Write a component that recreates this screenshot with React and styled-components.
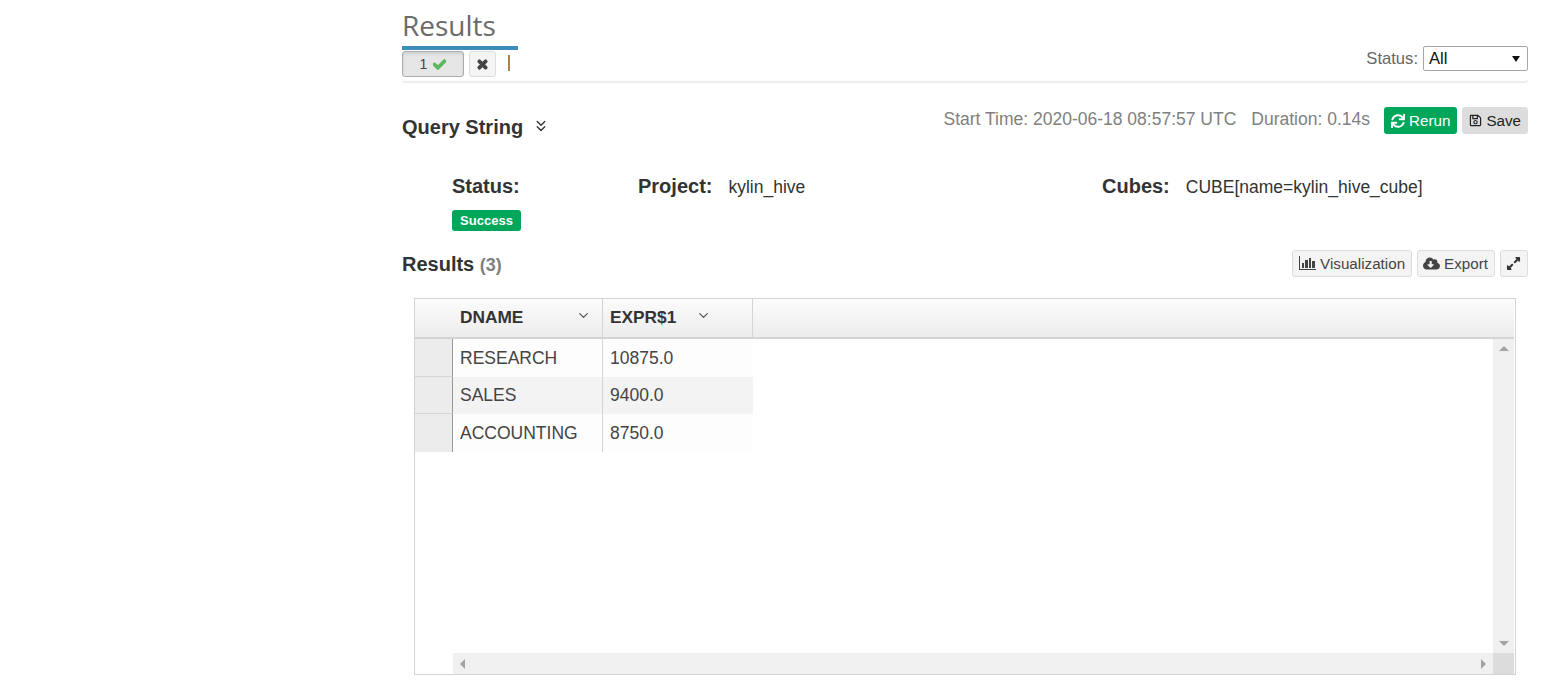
import React from 'react';
import styled, { createGlobalStyle } from 'styled-components';
import { FaCheck, FaTimes, FaSync, FaRegSave, FaCloudDownloadAlt, FaExpandAlt } from 'react-icons/fa';
import { FiChevronDown } from 'react-icons/fi';
import { ChevronsDown } from 'lucide-react';

const GlobalStyle = createGlobalStyle`
    html, body {
        margin: 0;
        padding: 0;
        background: white;
        font-family: "Liberation Sans", Arial, sans-serif;
        color: #333;
    }
`;

const Page = styled.div`
    height: 700px;
    overflow: hidden;
    padding: 0 20px 0 402px;
    box-sizing: border-box;
`;

const Title = styled.div`
    display: inline-block;
    width: 116px;
    height: 50px;
    box-sizing: border-box;
    padding-top: 7px;
    font-family: "Open Sans", sans-serif;
    font-size: 28px;
    line-height: 36px;
    color: #6b6b6b;
    border-bottom: 4px solid #3c8dbc;
    vertical-align: top;
`;

const TabBar = styled.div`
    display: flex;
    align-items: flex-start;
    height: 33px;
    box-sizing: border-box;
    padding-top: 1px;
    border-bottom: 2px solid #eee;
    border-radius: 0 0 3px 3px;
`;

const ActiveTab = styled.div`
    width: 62px;
    height: 26px;
    box-sizing: border-box;
    display: flex;
    align-items: center;
    justify-content: center;
    gap: 6px;
    background: #e6e6e6;
    border: 1px solid #adadad;
    border-radius: 3px;
    box-shadow: inset 0 2px 3px rgba(0, 0, 0, 0.1);
    font-size: 14px;
    color: #444;
    svg {
        stroke: #5cb85c;
        stroke-width: 40;
    }
`;

const CloseTab = styled.div`
    width: 27px;
    height: 26px;
    margin-left: 5px;
    box-sizing: border-box;
    display: flex;
    align-items: center;
    justify-content: center;
    background: #f4f4f4;
    border: 1px solid #ddd;
    border-radius: 3px;
    color: #444;
    font-size: 13px;
    svg {
        stroke: #444;
        stroke-width: 50;
    }
`;

const Cursor = styled.div`
    width: 2px;
    height: 16px;
    margin: 4px 0 0 12px;
    background: #a9814f;
`;

const StatusFilter = styled.label`
    margin: -5px 0 0 auto;
    display: flex;
    align-items: center;
    gap: 5px;
    font-size: 16.6px;
    color: #666;
`;

const FilterBox = styled.div`
    width: 105px;
    height: 25px;
    box-sizing: border-box;
    padding: 1px 5px 0;
    display: flex;
    align-items: center;
    justify-content: space-between;
    border: 1px solid #a6a6a6;
    border-radius: 2px;
    color: #111;
    font-size: 16.6px;
`;

const Caret = styled.span`
    width: 0;
    height: 0;
    margin-right: 2px;
    border-left: 4px solid transparent;
    border-right: 4px solid transparent;
    border-top: 6px solid #111;
`;

const QueryRow = styled.div`
    display: flex;
    justify-content: space-between;
    height: 91px;
    box-sizing: border-box;
    padding-top: 24px;
`;

const QueryTitle = styled.div`
    display: flex;
    align-items: flex-start;
    gap: 9px;
    font-size: 20px;
    line-height: 42px;
    margin-top: -1px;
    font-weight: bold;
    color: #333;
    svg {
        margin-top: 11px;
    }
`;

const QueryMeta = styled.div`
    display: flex;
    align-items: flex-start;
    font-size: 17.5px;
    line-height: 24px;
    color: #808080;
    white-space: nowrap;
`;

const MetaText = styled.span`
    margin-right: ${(p) => p.$gap}px;
`;

const FilledButton = styled.div`
    height: 27px;
    box-sizing: border-box;
    margin-left: ${(p) => p.$gap}px;
    padding: 0 7px;
    display: flex;
    align-items: center;
    gap: 4px;
    border-radius: 3px;
    font-size: 15.2px;
    background: ${(p) => p.$bg};
    color: ${(p) => p.$fg};
`;

const InfoGrid = styled.div`
    display: grid;
    grid-template-columns: 186px 464px auto;
    padding-left: 50px;
    height: 77px;
    align-content: start;
`;

const InfoCell = styled.div`
    display: flex;
    align-items: baseline;
    gap: ${(p) => p.$gap}px;
    font-size: 17.5px;
    line-height: 24px;
    color: #333;
`;

const InfoLabel = styled.span`
    font-size: 20px;
    font-weight: bold;
`;

const Badge = styled.div`
    grid-column: 1;
    justify-self: start;
    width: 69px;
    height: 21px;
    margin-top: 11px;
    display: flex;
    align-items: center;
    justify-content: center;
    background: #00a65a;
    border-radius: 3px;
    color: white;
    font-size: 13px;
    font-weight: bold;
`;

const ResultsBar = styled.div`
    display: flex;
    align-items: center;
    height: 27px;
    margin-top: -1px;
`;

const ResultsTitle = styled.div`
    font-size: 20px;
    font-weight: bold;
    color: #333;
    margin-top: 2px;
`;

const ResultsCount = styled.span`
    font-size: 18px;
    color: #808080;
`;

const OutlineButton = styled.div`
    height: 27px;
    box-sizing: border-box;
    margin-left: ${(p) => (p.$first ? 'auto' : '5px')};
    padding: 0 6px 1px 5px;
    display: flex;
    align-items: center;
    gap: 4px;
    background: #f4f4f4;
    border: 1px solid #ddd;
    border-radius: 3px;
    font-size: 15.2px;
    color: #444;
`;

const Grid = styled.div`
    margin: 21px 12px 0;
    height: 377px;
    box-sizing: border-box;
    border: 1px solid #d4d4d4;
    display: grid;
    grid-template-rows: 40px 1fr 21px;
    grid-template-columns: 38px 1fr 21px;
    padding-right: 1px;
`;

const GridHeader = styled.div`
    grid-column: 1 / -1;
    display: flex;
    background: linear-gradient(#fcfcfc, #ececec);
    border-bottom: 2px solid #d4d4d4;
    box-sizing: border-box;
`;

const HeaderCell = styled.div`
    width: ${(p) => p.$width}px;
    box-sizing: border-box;
    padding: 0 ${(p) => p.$padRight}px 2px 7px;
    display: flex;
    align-items: center;
    justify-content: space-between;
    font-size: 17.3px;
    font-weight: bold;
    color: #333;
    border-right: 1px solid #d4d4d4;
    svg {
        color: #555;
        font-size: 15px;
        margin-top: -3px;
    }
`;

const HeaderCorner = styled.div`
    width: 38px;
`;

const RowHeaders = styled.div`
    display: flex;
    flex-direction: column;
`;

const RowHeader = styled.div`
    height: ${(p) => p.$height}px;
    box-sizing: border-box;
    background: #ececec;
    border-bottom: 1px solid #d4d4d4;
    border-right: 1px solid #999;
    &:last-child {
        border-bottom: none;
    }
`;

const Rows = styled.div`
    display: flex;
    flex-direction: column;
    overflow: hidden;
`;

const Row = styled.div`
    display: flex;
    height: ${(p) => p.$height}px;
    width: 300px;
    background: ${(p) => (p.$even ? '#f3f3f3' : '#fdfdfd')};
`;

const Cell = styled.div`
    width: ${(p) => p.$width}px;
    box-sizing: border-box;
    padding-left: 7px;
    display: flex;
    align-items: center;
    font-size: 17.5px;
    color: #444;
    border-right: ${(p) => (p.$divided ? '1px solid #d4d4d4' : 'none')};
`;

const VerticalTrack = styled.div`
    background: #f0f0f0;
    display: flex;
    flex-direction: column;
    justify-content: space-between;
    align-items: center;
    padding: 7px 0;
`;

const HorizontalTrack = styled.div`
    grid-column: 2;
    background: #f0f0f0;
    display: flex;
    justify-content: space-between;
    align-items: center;
    padding: 0 7px;
`;

const ScrollCorner = styled.div`
    background: #dcdcdc;
`;

const Arrow = styled.span`
    width: 0;
    height: 0;
    border-style: solid;
    border-color: transparent;
    ${(p) => p.$dir === 'up' && 'border-width: 0 5px 5px; border-bottom-color: #a3a3a3;'}
    ${(p) => p.$dir === 'down' && 'border-width: 5px 5px 0; border-top-color: #a3a3a3;'}
    ${(p) => p.$dir === 'left' && 'border-width: 5px 5px 5px 0; border-right-color: #a3a3a3;'}
    ${(p) => p.$dir === 'right' && 'border-width: 5px 0 5px 5px; border-left-color: #a3a3a3;'}
`;

// fa-bar-chart, with its axis
const BarChartIcon = () => (
    <svg width="17" height="14" viewBox="0 0 17 14" fill="#444" style={{ marginLeft: 1 }}>
        <rect x="0" y="0" width="1" height="14" />
        <rect x="0" y="13" width="17" height="1" />
        <rect x="3" y="7" width="2" height="5" />
        <rect x="6" y="4" width="3" height="8" />
        <rect x="10" y="2" width="2" height="10" />
        <rect x="13" y="5" width="3" height="7" />
    </svg>
);

const RESULTS = [
    { name: 'RESEARCH', value: '10875.0', height: 38 },
    { name: 'SALES', value: '9400.0', height: 37 },
    { name: 'ACCOUNTING', value: '8750.0', height: 38 },
];

const App = () => {
    return (
        <Page>
            <GlobalStyle />
            <Title>Results</Title>
            <TabBar>
                <ActiveTab>1 <FaCheck color="#5cb85c" size={13} /></ActiveTab>
                <CloseTab><FaTimes /></CloseTab>
                <Cursor />
                <StatusFilter>
                    Status:
                    <FilterBox>All<Caret /></FilterBox>
                </StatusFilter>
            </TabBar>
            <QueryRow>
                <QueryTitle>Query String <ChevronsDown size={18} strokeWidth={1.8} /></QueryTitle>
                <QueryMeta>
                    <MetaText $gap={15}>Start Time: 2020-06-18 08:57:57 UTC</MetaText>
                    <MetaText $gap={0}>Duration: 0.14s</MetaText>
                    <FilledButton $gap={14} $bg="#00a65a" $fg="white"><FaSync size={14} />Rerun</FilledButton>
                    <FilledButton $gap={5} $bg="#ddd" $fg="#222"><FaRegSave size={13} />Save</FilledButton>
                </QueryMeta>
            </QueryRow>
            <InfoGrid>
                <InfoCell><InfoLabel>Status:</InfoLabel></InfoCell>
                <InfoCell $gap={16}><InfoLabel>Project:</InfoLabel>kylin_hive</InfoCell>
                <InfoCell $gap={16}><InfoLabel>Cubes:</InfoLabel>CUBE[name=kylin_hive_cube]</InfoCell>
                <Badge>Success</Badge>
            </InfoGrid>
            <ResultsBar>
                <ResultsTitle>Results <ResultsCount>(3)</ResultsCount></ResultsTitle>
                <OutlineButton $first><BarChartIcon />Visualization</OutlineButton>
                <OutlineButton><FaCloudDownloadAlt size={17} />Export</OutlineButton>
                <OutlineButton><FaExpandAlt size={15} color="#333" /></OutlineButton>
            </ResultsBar>
            <Grid>
                <GridHeader>
                    <HeaderCorner />
                    <HeaderCell $width={150} $padRight={11}>DNAME <FiChevronDown /></HeaderCell>
                    <HeaderCell $width={150} $padRight={41}>EXPR$1 <FiChevronDown /></HeaderCell>
                </GridHeader>
                <RowHeaders>
                    {RESULTS.map((row) => <RowHeader key={row.name} $height={row.height} />)}
                </RowHeaders>
                <Rows>
                    {RESULTS.map((row, i) => (
                        <Row key={row.name} $height={row.height} $even={i === 1}>
                            <Cell $width={150} $divided>{row.name}</Cell>
                            <Cell $width={150}>{row.value}</Cell>
                        </Row>
                    ))}
                </Rows>
                <VerticalTrack><Arrow $dir="up" /><Arrow $dir="down" /></VerticalTrack>
                <div />
                <HorizontalTrack><Arrow $dir="left" /><Arrow $dir="right" /></HorizontalTrack>
                <ScrollCorner />
            </Grid>
        </Page>
    );
};

export default App;
